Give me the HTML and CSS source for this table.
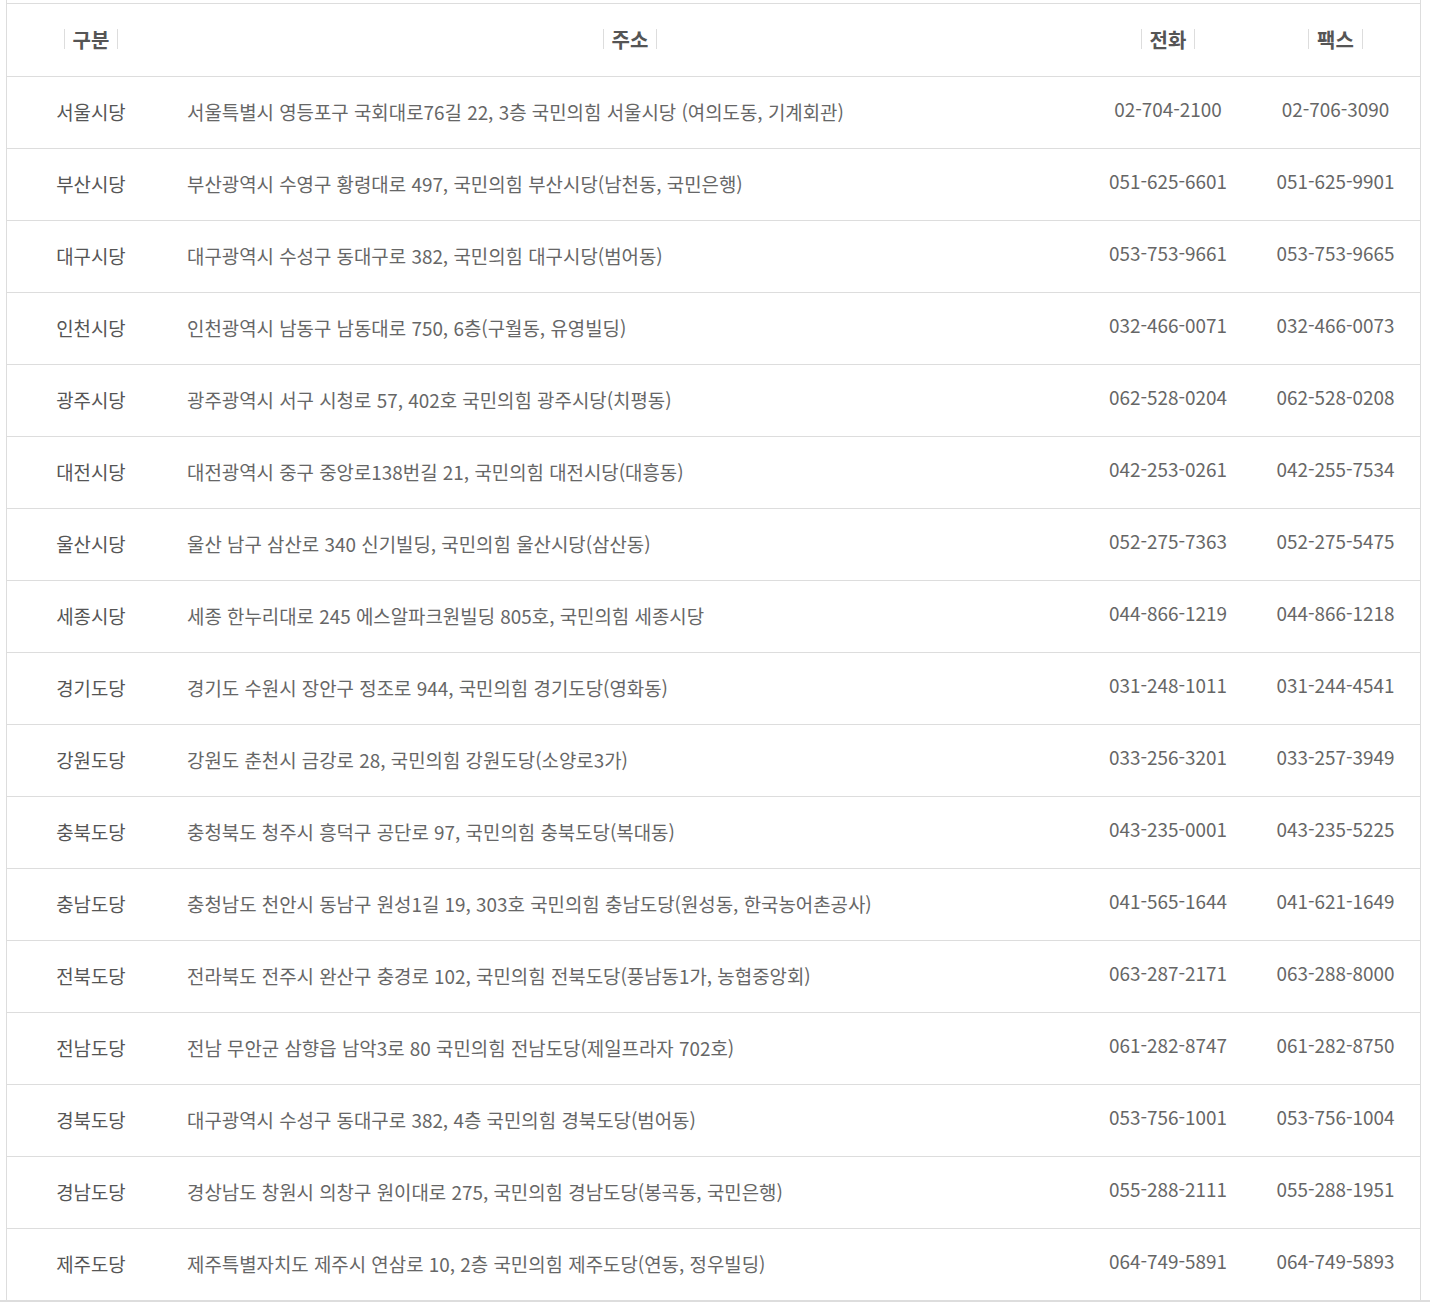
FILE: index.html
```html
<!DOCTYPE html>
<html lang="ko">
<head>
  <meta charset="UTF-8" />
  <title>시·도당 연락처</title>
  <link rel="stylesheet" href="styles.css">
</head>
<body>

  <div class="contact-wrap">
    <table class="contact-table">
      <colgroup>
        <col class="col-name">
        <col class="col-addr">
        <col class="col-tel">
        <col class="col-fax">
      </colgroup>
      <thead>
        <tr>
          <th><span class="th-label">구분</span></th>
          <th><span class="th-label">주소</span></th>
          <th><span class="th-label">전화</span></th>
          <th><span class="th-label">팩스</span></th>
        </tr>
      </thead>
      <tbody>
        <tr>
          <td class="name">서울시당</td>
          <td class="addr">서울특별시 영등포구 국회대로76길 22, 3층 국민의힘 서울시당 (여의도동, 기계회관)</td>
          <td class="num">02-704-2100</td>
          <td class="num">02-706-3090</td>
        </tr>
        <tr>
          <td class="name">부산시당</td>
          <td class="addr">부산광역시 수영구 황령대로 497, 국민의힘 부산시당(남천동, 국민은행)</td>
          <td class="num">051-625-6601</td>
          <td class="num">051-625-9901</td>
        </tr>
        <tr>
          <td class="name">대구시당</td>
          <td class="addr">대구광역시 수성구 동대구로 382, 국민의힘 대구시당(범어동)</td>
          <td class="num">053-753-9661</td>
          <td class="num">053-753-9665</td>
        </tr>
        <tr>
          <td class="name">인천시당</td>
          <td class="addr">인천광역시 남동구 남동대로 750, 6층(구월동, 유영빌딩)</td>
          <td class="num">032-466-0071</td>
          <td class="num">032-466-0073</td>
        </tr>
        <tr>
          <td class="name">광주시당</td>
          <td class="addr">광주광역시 서구 시청로 57, 402호 국민의힘 광주시당(치평동)</td>
          <td class="num">062-528-0204</td>
          <td class="num">062-528-0208</td>
        </tr>
        <tr>
          <td class="name">대전시당</td>
          <td class="addr">대전광역시 중구 중앙로138번길 21, 국민의힘 대전시당(대흥동)</td>
          <td class="num">042-253-0261</td>
          <td class="num">042-255-7534</td>
        </tr>
        <tr>
          <td class="name">울산시당</td>
          <td class="addr">울산 남구 삼산로 340 신기빌딩, 국민의힘 울산시당(삼산동)</td>
          <td class="num">052-275-7363</td>
          <td class="num">052-275-5475</td>
        </tr>
        <tr>
          <td class="name">세종시당</td>
          <td class="addr">세종 한누리대로 245 에스알파크원빌딩 805호, 국민의힘 세종시당</td>
          <td class="num">044-866-1219</td>
          <td class="num">044-866-1218</td>
        </tr>
        <tr>
          <td class="name">경기도당</td>
          <td class="addr">경기도 수원시 장안구 정조로 944, 국민의힘 경기도당(영화동)</td>
          <td class="num">031-248-1011</td>
          <td class="num">031-244-4541</td>
        </tr>
        <tr>
          <td class="name">강원도당</td>
          <td class="addr">강원도 춘천시 금강로 28, 국민의힘 강원도당(소양로3가)</td>
          <td class="num">033-256-3201</td>
          <td class="num">033-257-3949</td>
        </tr>
        <tr>
          <td class="name">충북도당</td>
          <td class="addr">충청북도 청주시 흥덕구 공단로 97, 국민의힘 충북도당(복대동)</td>
          <td class="num">043-235-0001</td>
          <td class="num">043-235-5225</td>
        </tr>
        <tr>
          <td class="name">충남도당</td>
          <td class="addr">충청남도 천안시 동남구 원성1길 19, 303호 국민의힘 충남도당(원성동, 한국농어촌공사)</td>
          <td class="num">041-565-1644</td>
          <td class="num">041-621-1649</td>
        </tr>
        <tr>
          <td class="name">전북도당</td>
          <td class="addr">전라북도 전주시 완산구 충경로 102, 국민의힘 전북도당(풍남동1가, 농협중앙회)</td>
          <td class="num">063-287-2171</td>
          <td class="num">063-288-8000</td>
        </tr>
        <tr>
          <td class="name">전남도당</td>
          <td class="addr">전남 무안군 삼향읍 남악3로 80 국민의힘 전남도당(제일프라자 702호)</td>
          <td class="num">061-282-8747</td>
          <td class="num">061-282-8750</td>
        </tr>
        <tr>
          <td class="name">경북도당</td>
          <td class="addr">대구광역시 수성구 동대구로 382, 4층 국민의힘 경북도당(범어동)</td>
          <td class="num">053-756-1001</td>
          <td class="num">053-756-1004</td>
        </tr>
        <tr>
          <td class="name">경남도당</td>
          <td class="addr">경상남도 창원시 의창구 원이대로 275, 국민의힘 경남도당(봉곡동, 국민은행)</td>
          <td class="num">055-288-2111</td>
          <td class="num">055-288-1951</td>
        </tr>
        <tr>
          <td class="name">제주도당</td>
          <td class="addr">제주특별자치도 제주시 연삼로 10, 2층 국민의힘 제주도당(연동, 정우빌딩)</td>
          <td class="num">064-749-5891</td>
          <td class="num">064-749-5893</td>
        </tr>
      </tbody>
    </table>
  </div>
  <div class="page-line"></div>

</body>
</html>
```

FILE: styles.css
```css
* {
  margin: 0;
  padding: 0;
  box-sizing: border-box;
}

body {
  background: #fff;
  font-family: "Noto Sans CJK KR", "Noto Sans", sans-serif;
  color: #666;
}

.contact-wrap {
  width: 1415px;
  margin-left: 6px;
  padding-top: 3px;
  border-left: 1px solid #ddd;
  border-right: 1px solid #ddd;
}

.contact-table {
  width: 100%;
  table-layout: fixed;
  border-collapse: collapse;
  border-top: 1px solid #ddd;
}

.col-name { width: 168px; }
.col-addr { width: 910px; }
.col-tel  { width: 166px; }
.col-fax  { width: 169px; }

.contact-table th {
  height: 73px;
  text-align: center;
  vertical-align: middle;
  font-size: 20px;
  font-weight: bold;
  color: #555;
  border-bottom: 1px solid #ddd;
}

.th-label {
  display: inline-flex;
  align-items: center;
  gap: 8px;
}

.th-label::before,
.th-label::after {
  content: "";
  display: block;
  width: 1px;
  height: 20px;
  background: #ddd;
}

.contact-table td {
  height: 72px;
  padding-bottom: 2px;
  text-align: center;
  vertical-align: middle;
  font-size: 18.9px;
  color: #666;
  border-bottom: 1px solid #ddd;
}

.contact-table td.name {
  color: #555;
}

.contact-table td.addr {
  text-align: left;
  padding-left: 12px;
}

.contact-table td.num {
  padding-bottom: 8px;
}

.page-line {
  height: 2px;
  margin-top: -1px;
  background: #ddd;
}
```
